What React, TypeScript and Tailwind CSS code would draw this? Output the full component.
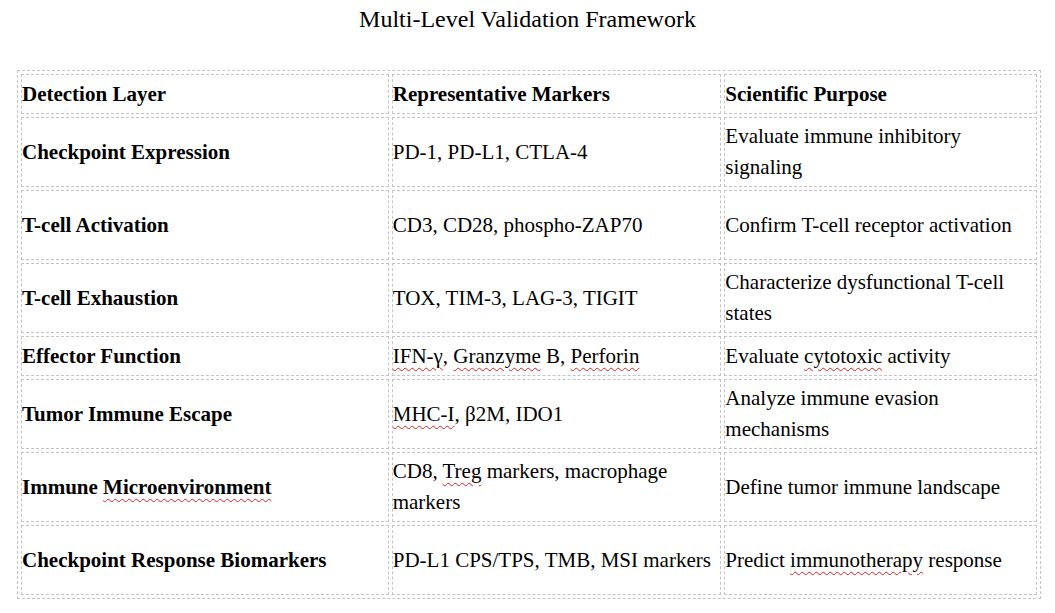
import React from "react";

type Cell = React.ReactNode;

interface Row {
  layer: Cell;
  markers: Cell;
  purpose: Cell;
  tall?: boolean;
}

// red squiggle the way a word processor marks unknown words
function Sp({ children }: { children: React.ReactNode }) {
  return (
    <span className="underline decoration-wavy decoration-[#e02020] decoration-1 underline-offset-[4px]">
      {children}
    </span>
  );
}

const rows: Row[] = [
  {
    layer: "Checkpoint Expression",
    markers: "PD-1, PD-L1, CTLA-4",
    purpose: "Evaluate immune inhibitory signaling",
    tall: true,
  },
  {
    layer: "T-cell Activation",
    markers: "CD3, CD28, phospho-ZAP70",
    purpose: "Confirm T-cell receptor activation",
    tall: true,
  },
  {
    layer: "T-cell Exhaustion",
    markers: "TOX, TIM-3, LAG-3, TIGIT",
    purpose: "Characterize dysfunctional T-cell states",
    tall: true,
  },
  {
    layer: "Effector Function",
    markers: (
      <>
        <Sp>IFN-γ</Sp>, <Sp>Granzyme</Sp> B, <Sp>Perforin</Sp>
      </>
    ),
    purpose: (
      <>
        Evaluate <Sp>cytotoxic</Sp> activity
      </>
    ),
  },
  {
    layer: "Tumor Immune Escape",
    markers: (
      <>
        <Sp>MHC-I</Sp>, β2M, IDO1
      </>
    ),
    purpose: "Analyze immune evasion mechanisms",
    tall: true,
  },
  {
    layer: (
      <>
        Immune <Sp>Microenvironment</Sp>
      </>
    ),
    markers: (
      <>
        CD8, <Sp>Treg</Sp> markers, macrophage markers
      </>
    ),
    purpose: "Define tumor immune landscape",
    tall: true,
  },
  {
    layer: "Checkpoint Response Biomarkers",
    markers: "PD-L1 CPS/TPS, TMB, MSI markers",
    purpose: (
      <>
        Predict <Sp>immunotherapy</Sp> response
      </>
    ),
    tall: true,
  },
];

const cellCls =
  "border border-dashed border-[#c4c4c4] px-0 py-0 align-middle text-left";

export default function App() {
  return (
    <div className="min-h-[613px] w-[1055px] bg-white font-['Liberation_Serif','Times_New_Roman',serif] text-black">
      <div className="pt-[5px] text-center text-[24px] leading-[28px]">
        Multi-Level Validation Framework
      </div>

      <table className="ml-[17px] mt-[37px] w-[1024px] table-fixed border-separate border-spacing-[3px] border border-dashed border-[#c4c4c4] text-[21px] leading-[31px]">
        <colgroup>
          <col className="w-[367px]" />
          <col className="w-[329px]" />
          <col className="w-[312px]" />
        </colgroup>
        <thead>
          <tr className="h-[40px]">
            <th className={`${cellCls} font-bold`}>Detection Layer</th>
            <th className={`${cellCls} font-bold`}>Representative Markers</th>
            <th className={`${cellCls} font-bold`}>Scientific Purpose</th>
          </tr>
        </thead>
        <tbody>
          {rows.map((r, i) => (
            <tr key={i} className={r.tall ? "h-[70px]" : "h-[40px]"}>
              <td className={`${cellCls} font-bold`}>{r.layer}</td>
              <td className={cellCls}>{r.markers}</td>
              <td className={cellCls}>{r.purpose}</td>
            </tr>
          ))}
        </tbody>
      </table>
    </div>
  );
}
